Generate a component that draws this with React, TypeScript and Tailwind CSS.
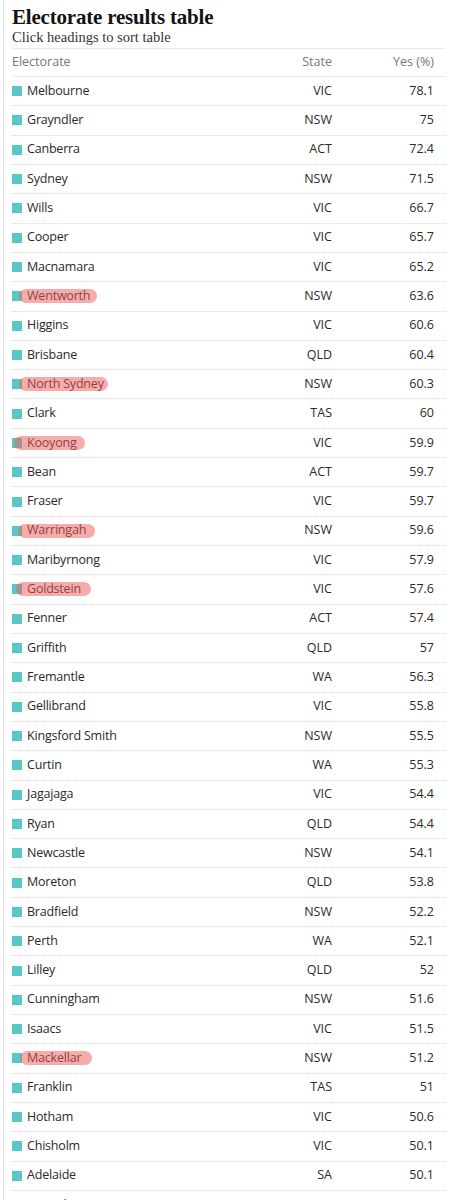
import React from "react";

type Row = { name: string; state: string; yes: string; hl?: [number, number]; color?: string };

const rows: Row[] = [
  { name: "Melbourne", state: "VIC", yes: "78.1" },
  { name: "Grayndler", state: "NSW", yes: "75" },
  { name: "Canberra", state: "ACT", yes: "72.4" },
  { name: "Sydney", state: "NSW", yes: "71.5" },
  { name: "Wills", state: "VIC", yes: "66.7" },
  { name: "Cooper", state: "VIC", yes: "65.7" },
  { name: "Macnamara", state: "VIC", yes: "65.2" },
  { name: "Wentworth", state: "NSW", yes: "63.6", hl: [19, 78] },
  { name: "Higgins", state: "VIC", yes: "60.6" },
  { name: "Brisbane", state: "QLD", yes: "60.4" },
  { name: "North Sydney", state: "NSW", yes: "60.3", hl: [19, 89] },
  { name: "Clark", state: "TAS", yes: "60" },
  { name: "Kooyong", state: "VIC", yes: "59.9", hl: [14, 71] },
  { name: "Bean", state: "ACT", yes: "59.7" },
  { name: "Fraser", state: "VIC", yes: "59.7" },
  { name: "Warringah", state: "NSW", yes: "59.6", hl: [18, 77] },
  { name: "Maribyrnong", state: "VIC", yes: "57.9" },
  { name: "Goldstein", state: "VIC", yes: "57.6", hl: [16, 75] },
  { name: "Fenner", state: "ACT", yes: "57.4" },
  { name: "Griffith", state: "QLD", yes: "57" },
  { name: "Fremantle", state: "WA", yes: "56.3" },
  { name: "Gellibrand", state: "VIC", yes: "55.8" },
  { name: "Kingsford Smith", state: "NSW", yes: "55.5" },
  { name: "Curtin", state: "WA", yes: "55.3" },
  { name: "Jagajaga", state: "VIC", yes: "54.4" },
  { name: "Ryan", state: "QLD", yes: "54.4" },
  { name: "Newcastle", state: "NSW", yes: "54.1" },
  { name: "Moreton", state: "QLD", yes: "53.8" },
  { name: "Bradfield", state: "NSW", yes: "52.2" },
  { name: "Perth", state: "WA", yes: "52.1" },
  { name: "Lilley", state: "QLD", yes: "52" },
  { name: "Cunningham", state: "NSW", yes: "51.6" },
  { name: "Isaacs", state: "VIC", yes: "51.5" },
  { name: "Mackellar", state: "NSW", yes: "51.2", hl: [20, 72] },
  { name: "Franklin", state: "TAS", yes: "51" },
  { name: "Hotham", state: "VIC", yes: "50.6" },
  { name: "Chisholm", state: "VIC", yes: "50.1" },
  { name: "Adelaide", state: "SA", yes: "50.1" },
  { name: "Bennelong", state: "NSW", yes: "49.9", color: "#f5b968" },
];

export default function App() {
  return (
    <div className="w-[456px] h-[1200px] overflow-hidden bg-white">
      <div className="ml-[3px] border-l border-[#e4e4e4] pl-[8px] pr-[10px] min-h-[1200px]">
        <div className="h-[48px] pt-[4px]">
          <h1
            className="text-[21px] leading-[26px] font-bold text-[#121212] tracking-[-0.2px]"
            style={{ fontFamily: '"Liberation Serif", "DejaVu Serif", serif' }}
          >
            Electorate results table
          </h1>
          <p
            className="text-[14.5px] leading-[15px] text-[#333]"
            style={{ fontFamily: '"Liberation Serif", "DejaVu Serif", serif' }}
          >
            Click headings to sort table
          </p>
        </div>
        <div style={{ fontFamily: '"Open Sans", "Noto Sans", sans-serif' }}>
          <div className="h-[29px] flex items-center border-t border-b border-[#ececec] text-[12.5px] text-[#767676]">
            <div className="flex-1">Electorate</div>
            <div className="w-[80px] text-right">State</div>
            <div className="w-[114px] pr-[12px] text-right">Yes (%)</div>
          </div>
          {rows.map((r) => (
            <div
              key={r.name}
              className="h-[29.32px] flex items-center border-b border-dotted border-[#d8d8d8] text-[12.5px] text-[#2a2a2a] relative"
            >
              <div className="flex-1 flex items-center">
                <span
                  className="w-[10px] h-[10px] mr-[5px] shrink-0"
                  style={{ backgroundColor: r.color ?? "#5ac7c7" }}
                />
                <span className="tracking-[-0.2px]">{r.name}</span>
              </div>
              <div className="w-[80px] text-right">{r.state}</div>
              <div className="w-[114px] pr-[12px] text-right">{r.yes}</div>
              {r.hl && (
                <span
                  className="absolute top-1/2 -translate-y-1/2 h-[14px] rounded-full bg-[rgba(240,90,90,0.5)]"
                  style={{ left: r.hl[0] - 12, width: r.hl[1] }}
                />
              )}
            </div>
          ))}
        </div>
      </div>
    </div>
  );
}
